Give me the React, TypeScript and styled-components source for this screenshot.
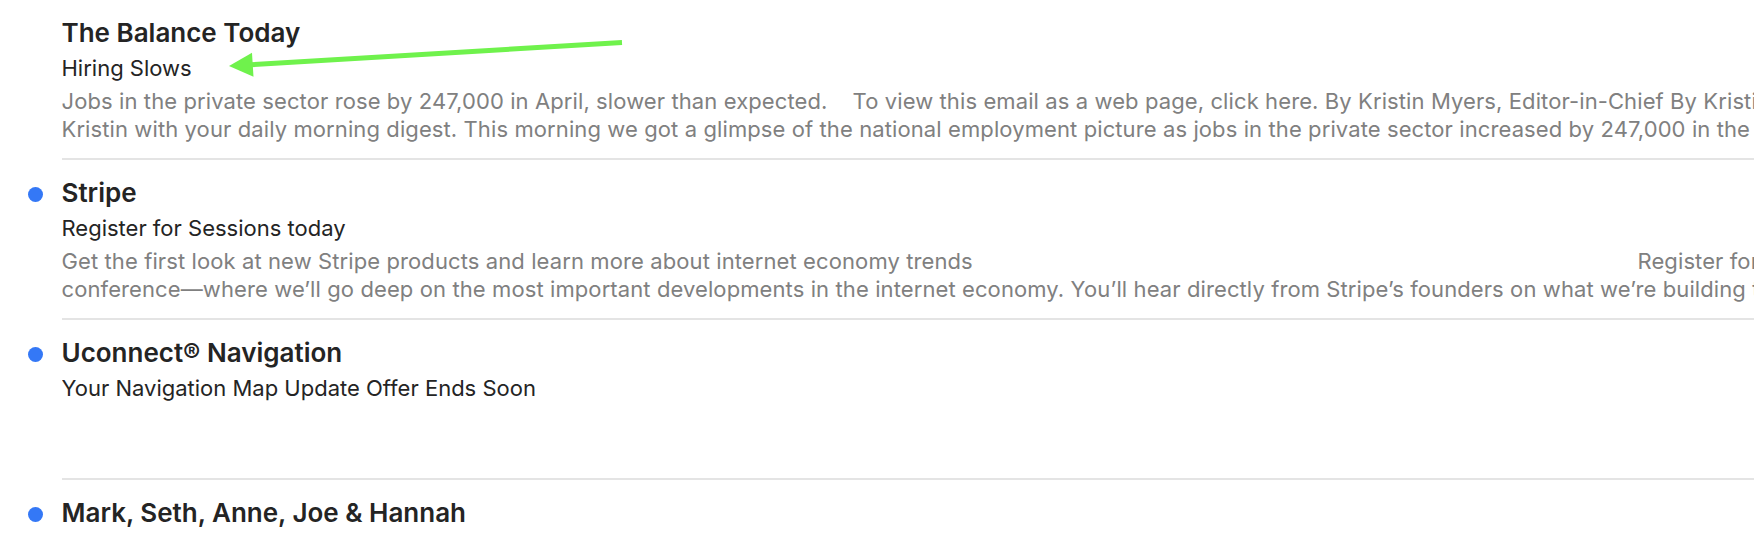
import React from "react";
import styled, { createGlobalStyle } from "styled-components";

const GlobalStyle = createGlobalStyle`
  html, body {
    margin: 0;
    padding: 0;
    background: #ffffff;
    overflow: hidden;
  }
  body {
    font-family: Inter, "Noto Sans", "Liberation Sans", sans-serif;
    -webkit-font-smoothing: antialiased;
  }
`;

const Page = styled.div`
  position: relative;
  width: 1754px;
  height: 538px;
  overflow: hidden;
  background: #ffffff;
`;

const List = styled.div`
  display: flex;
  flex-direction: column;
`;

const Row = styled.div`
  display: grid;
  grid-template-columns: 61.5px 1fr;
  height: 160px;
  box-sizing: border-box;
`;

const DotCell = styled.div`
  display: flex;
  justify-content: flex-start;
  padding-left: 28px;
  padding-top: 27px;
  box-sizing: border-box;
`;

const UnreadDot = styled.span<{ $visible: boolean }>`
  display: block;
  width: 15px;
  height: 15px;
  border-radius: 50%;
  background: ${(p) => (p.$visible ? "#3478f6" : "transparent")};
`;

const Content = styled.div`
  display: flex;
  flex-direction: column;
  min-width: 0;
  padding-top: 16.5px;
  border-bottom: 2px solid #e4e4e4;
  box-sizing: border-box;
  overflow: hidden;
`;

const Sender = styled.div`
  font-size: 26px;
  line-height: 32px;
  font-weight: 600;
  color: #242424;
  white-space: nowrap;
`;

const Subject = styled.div`
  margin-top: 5.5px;
  font-size: 22px;
  line-height: 28px;
  font-weight: 400;
  color: #242424;
  white-space: nowrap;
`;

const Preview = styled.div`
  margin-top: 6.3px;
  display: flex;
  flex-direction: column;
`;

const PreviewLine = styled.div`
  font-size: 22px;
  line-height: 27.5px;
  color: #808080;
  white-space: pre;
  overflow: hidden;
  letter-spacing: 0.1px;
`;

const Lead = styled.span<{ $w: number }>`
  display: inline-block;
  width: ${(p) => p.$w}px;
`;

const Annotation = styled.svg`
  position: absolute;
  left: 0;
  top: 0;
  pointer-events: none;
`;

type Mail = {
  sender: string;
  subject: string;
  unread: boolean;
  lines: React.ReactNode[];
};

const mails: Mail[] = [
  {
    sender: "The Balance Today",
    subject: "Hiring Slows",
    unread: false,
    lines: [
      "Jobs in the private sector rose by 247,000 in April, slower than expected.    To view this email as a web page, click here. By Kristin Myers, Editor-in-Chief By Kristin Myers",
      "Kristin with your daily morning digest. This morning we got a glimpse of the national employment picture as jobs in the private sector increased by 247,000 in the month of April",
    ],
  },
  {
    sender: "Stripe",
    subject: "Register for Sessions today",
    unread: true,
    lines: [
      <>
        <Lead $w={1576}>
          Get the first look at new Stripe products and learn more about internet economy trends
        </Lead>
        Register for Sessions
      </>,
      "conference\u2014where we\u2019ll go deep on the most important developments in the internet economy. You\u2019ll hear directly from Stripe\u2019s founders on what we\u2019re building this year",
    ],
  },
  {
    sender: "Uconnect\u00ae Navigation",
    subject: "Your Navigation Map Update Offer Ends Soon",
    unread: true,
    lines: [],
  },
  {
    sender: "Mark, Seth, Anne, Joe & Hannah",
    subject: "",
    unread: true,
    lines: [],
  },
];

export default function App() {
  return (
    <>
      <GlobalStyle />
      <Page>
        <List>
          {mails.map((m, i) => (
            <Row key={i}>
              <DotCell>
                <UnreadDot $visible={m.unread} />
              </DotCell>
              <Content>
                <Sender>{m.sender}</Sender>
                {m.subject && <Subject>{m.subject}</Subject>}
                {m.lines.length > 0 && (
                  <Preview>
                    {m.lines.map((l, j) => (
                      <PreviewLine key={j}>{l}</PreviewLine>
                    ))}
                  </Preview>
                )}
              </Content>
            </Row>
          ))}
        </List>
        <Annotation width="1754" height="538" viewBox="0 0 1754 538">
          <line
            x1="622"
            y1="42.5"
            x2="250"
            y2="64.8"
            stroke="#6ff24c"
            strokeWidth="5"
            strokeLinecap="butt"
          />
          <polygon points="229,66 252,52.8 253.5,76.8" fill="#6ff24c" />
        </Annotation>
      </Page>
    </>
  );
}
